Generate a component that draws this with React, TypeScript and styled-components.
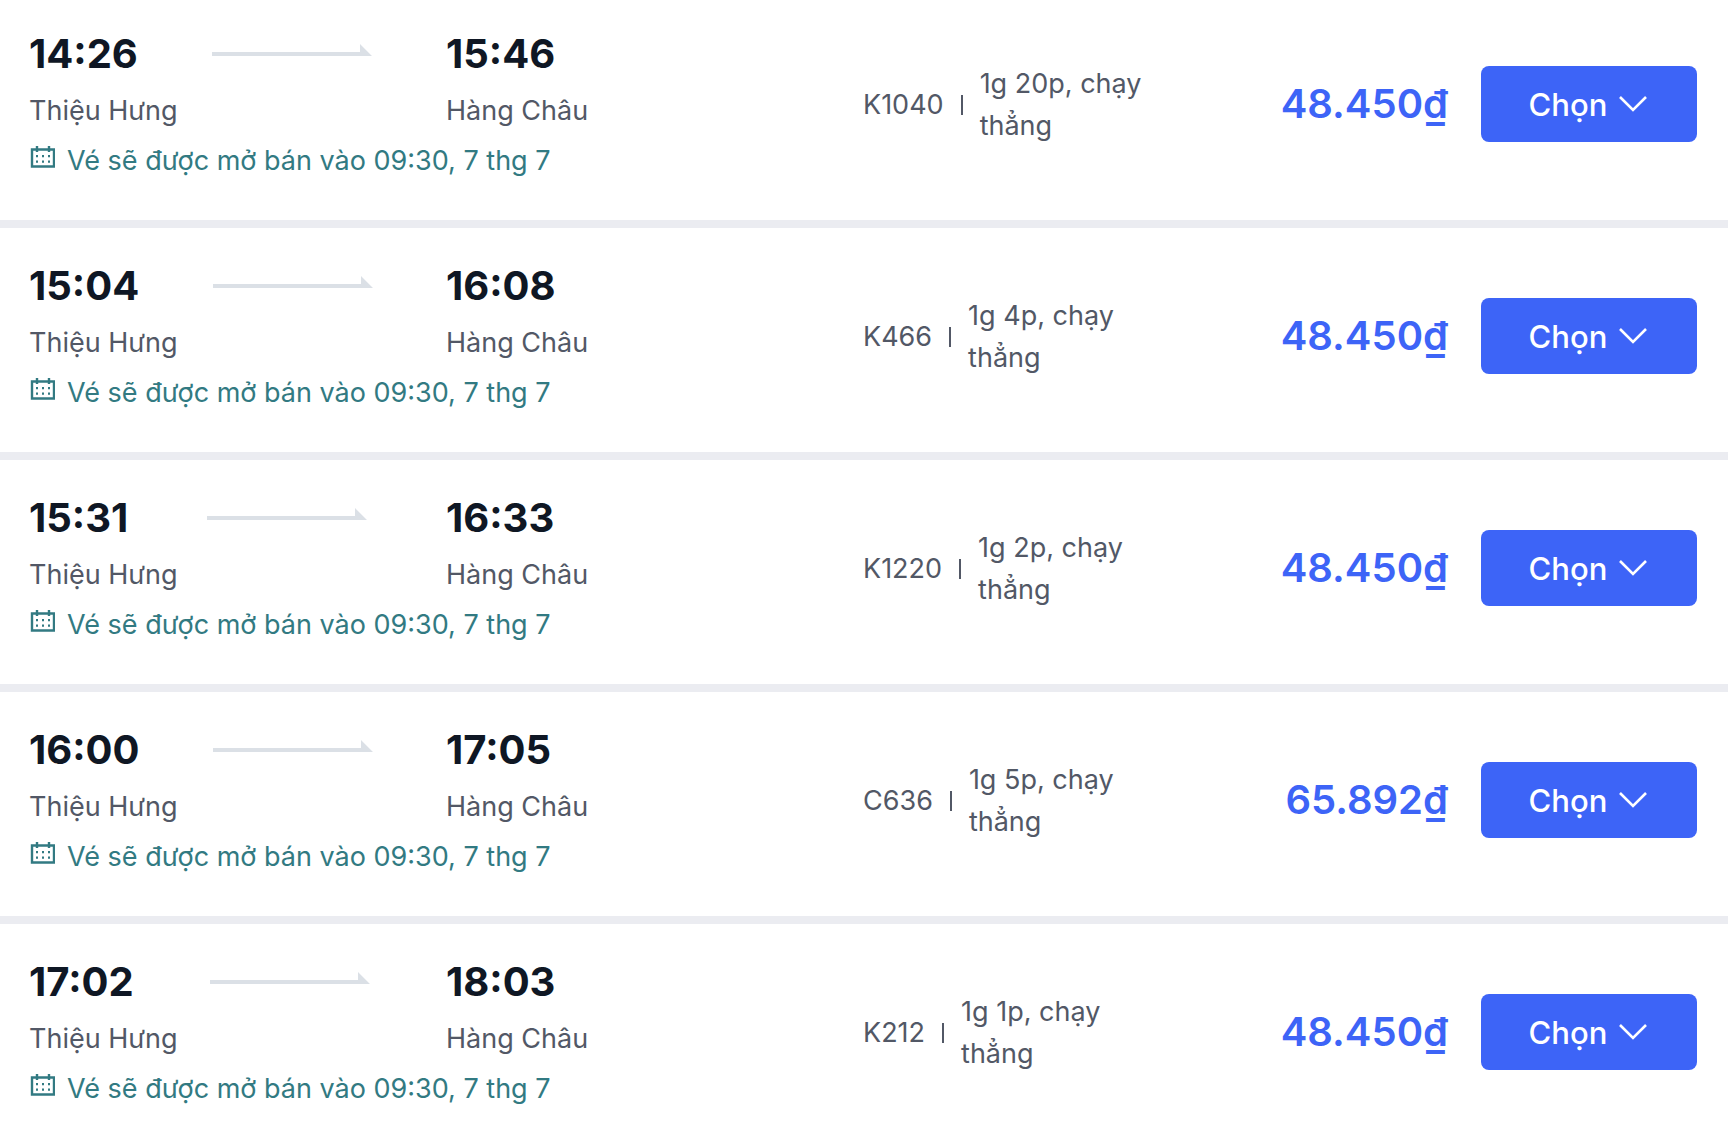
import React from "react";
import styled, { createGlobalStyle } from "styled-components";

const GlobalStyle = createGlobalStyle`
  * { box-sizing: border-box; }
  body {
    margin: 0;
    background: #fff;
    color: #525866;
    font-family: Inter, "Noto Sans", sans-serif;
    font-size: 27px;
    line-height: 42px;
    overflow-x: hidden;
  }
`;

const List = styled.ul`
  list-style: none;
  margin: -4px 0 0;
  padding: 0;
`;

const Trip = styled.li`
  display: grid;
  grid-template-columns: 1fr 1fr;
  padding: 32px 31px 39px 29px;

  & + & {
    border-top: 8px solid #ebecf1;
  }
`;

const Schedule = styled.div`
  display: grid;
  grid-template-columns: 1fr 1fr;
`;

const TimeLine = styled.div`
  display: flex;
  align-items: center;
`;

const Time = styled.time`
  color: #0f1724;
  font-size: 40px;
  font-weight: 700;
  line-height: 52px;
`;

const ArrowSlot = styled.span`
  flex: 1;
  display: flex;
  justify-content: center;
`;

const Station = styled.div`
  margin-top: 9px;
  line-height: 44px;
`;

const Notice = styled.div`
  grid-column: 1 / -1;
  display: flex;
  align-items: center;
  gap: 12px;
  margin-top: 8px;
  line-height: 40px;
  color: #327a82;

  svg {
    margin-bottom: 8px;
  }
`;

const Offer = styled.div`
  display: flex;
  align-items: center;
  padding-bottom: 1px;
`;

const Train = styled.div`
  flex: 0 0 36%;
  display: flex;
  align-items: center;
  padding-top: 2px;
`;

const Separator = styled.span`
  flex: none;
  width: 2px;
  height: 20px;
  margin: 0 17px;
  background: #525866;
`;

const Price = styled.strong`
  flex: 1;
  margin-right: 33px;
  text-align: right;
  white-space: nowrap;
  color: #3d64f7;
  font-size: 40px;
  font-weight: 600;
  line-height: 52px;
`;

const ChooseButton = styled.button`
  flex: none;
  display: flex;
  align-items: center;
  justify-content: center;
  gap: 12px;
  width: 216px;
  height: 76px;
  padding: 2px 2px 0 0;
  border: 0;
  border-radius: 8px;
  background: #3d64f7;
  color: #fff;
  font: inherit;
  font-size: 31px;
  font-weight: 500;
  cursor: pointer;

  svg {
    margin-bottom: 2px;
  }
`;

const Arrow = () => (
  <svg width="160" height="28" viewBox="0 0 160 28" aria-hidden="true">
    <path d="M0 12H148V4L160 16H0Z" fill="#dbe0e6" />
  </svg>
);

const CalendarIcon = () => (
  <svg width="26" height="22" viewBox="0 0 26 22" fill="none" aria-hidden="true">
    <path d="M3 3.500H25V20.500H3ZM8 0V6M20 0V6" stroke="currentColor" strokeWidth="2.400" />
    <path
      d="M7 9h2v2.200H7zM13 9h2v2.200h-2zM19 9h2v2.200h-2zM7 14.500h2v2.200H7zM13 14.500h2v2.200h-2zM19 14.500h2v2.200h-2z"
      fill="currentColor"
    />
  </svg>
);

const ChevronIcon = () => (
  <svg width="28" height="20" viewBox="0 0 28 20" fill="none" aria-hidden="true">
    <path d="M1 3L14 16L27 3" stroke="currentColor" strokeWidth="2.600" />
  </svg>
);

const trips = [
  { depart: "14:26", arrive: "15:46", code: "K1040", duration: "1g 20p, chạy thẳng", price: "48.450₫" },
  { depart: "15:04", arrive: "16:08", code: "K466", duration: "1g 4p, chạy thẳng", price: "48.450₫" },
  { depart: "15:31", arrive: "16:33", code: "K1220", duration: "1g 2p, chạy thẳng", price: "48.450₫" },
  { depart: "16:00", arrive: "17:05", code: "C636", duration: "1g 5p, chạy thẳng", price: "65.892₫" },
  { depart: "17:02", arrive: "18:03", code: "K212", duration: "1g 1p, chạy thẳng", price: "48.450₫" },
];

export default function App() {
  return (
    <>
      <GlobalStyle />
      <List>
        {trips.map((trip) => (
          <Trip key={trip.code}>
            <Schedule>
              <div>
                <TimeLine>
                  <Time>{trip.depart}</Time>
                  <ArrowSlot>
                    <Arrow />
                  </ArrowSlot>
                </TimeLine>
                <Station>Thiệu Hưng</Station>
              </div>
              <div>
                <TimeLine>
                  <Time>{trip.arrive}</Time>
                </TimeLine>
                <Station>Hàng Châu</Station>
              </div>
              <Notice>
                <CalendarIcon />
                <span>Vé sẽ được mở bán vào 09:30, 7 thg 7</span>
              </Notice>
            </Schedule>
            <Offer>
              <Train>
                <span>{trip.code}</span>
                <Separator />
                <span>{trip.duration}</span>
              </Train>
              <Price>{trip.price}</Price>
              <ChooseButton type="button">
                Chọn
                <ChevronIcon />
              </ChooseButton>
            </Offer>
          </Trip>
        ))}
      </List>
    </>
  );
}
